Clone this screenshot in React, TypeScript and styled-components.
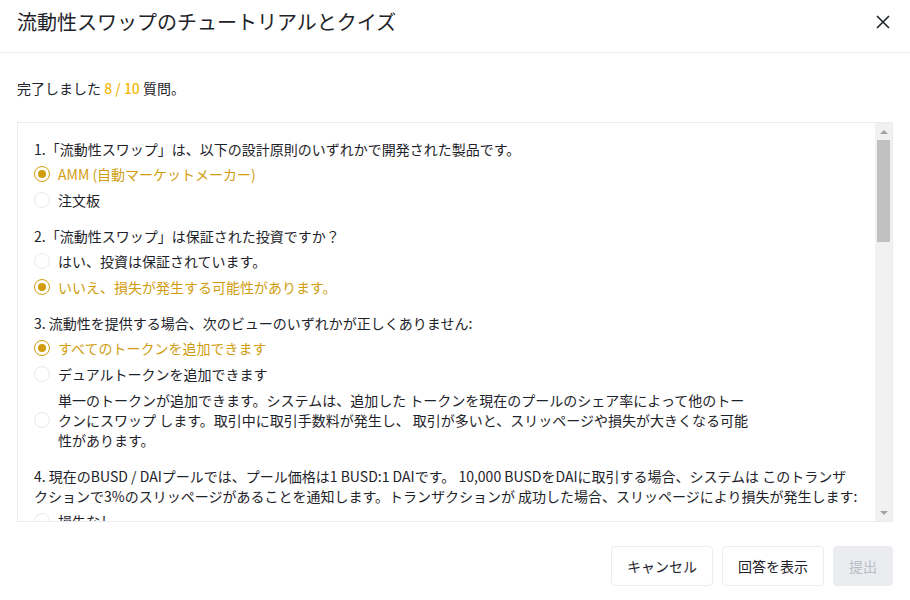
import React from 'react'
import styled, { createGlobalStyle } from 'styled-components'

const GlobalStyle = createGlobalStyle`
  html, body {
    margin: 0;
    padding: 0;
    background: #ffffff;
  }
  body {
    font-family: "Noto Sans CJK JP", "Noto Sans", sans-serif;
    color: #1e2329;
  }
  * {
    box-sizing: border-box;
  }
`

const brand = '#d19d0f'

interface Option {
  label: React.ReactNode
  checked?: boolean
}

interface Question {
  title: React.ReactNode
  options: Option[]
}

const questions: Question[] = [
  {
    title: '1.「流動性スワップ」は、以下の設計原則のいずれかで開発された製品です。',
    options: [{ label: 'AMM (自動マーケットメーカー)', checked: true }, { label: '注文板' }],
  },
  {
    title: '2.「流動性スワップ」は保証された投資ですか？',
    options: [{ label: 'はい、投資は保証されています。' }, { label: 'いいえ、損失が発生する可能性があります。', checked: true }],
  },
  {
    title: '3. 流動性を提供する場合、次のビューのいずれかが正しくありません:',
    options: [
      { label: 'すべてのトークンを追加できます', checked: true },
      { label: 'デュアルトークンを追加できます' },
      {
        label: (
          <>
            単一のトークンが追加できます。システムは、追加した トークンを現在のプールのシェア率によって他のトー
            <br />
            クンにスワップ します。取引中に取引手数料が発生し、 取引が多いと、スリッページや損失が大きくなる可能
            <br />
            性があります。
          </>
        ),
      },
    ],
  },
  {
    title: (
      <>
        4. 現在のBUSD / DAIプールでは、プール価格は1 BUSD:1 DAIです。 10,000 BUSDをDAIに取引する場合、システムは このトランザ
        <br />
        クションで3%のスリッページがあることを通知します。トランザクションが 成功した場合、スリッページにより損失が発生します:
      </>
    ),
    options: [{ label: '損失なし' }],
  },
]

const Dialog = styled.div`
  width: 910px;
  height: 600px;
  display: flex;
  flex-direction: column;
  background: #ffffff;
`

const Header = styled.div`
  height: 53px;
  padding: 8px 20px 0 17px;
  display: flex;
  align-items: flex-start;
  justify-content: space-between;
  border-bottom: 1px solid #eaecef;
`

const Title = styled.h2`
  margin: 0;
  font-size: 20px;
  line-height: 28px;
  font-weight: 400;
  color: #1e2329;
`

const CloseButton = styled.button`
  width: 28px;
  height: 28px;
  margin-right: -7px;
  padding: 0;
  border: none;
  background: transparent;
  display: flex;
  align-items: center;
  justify-content: center;
  color: #1e2329;
  cursor: pointer;
`

const Body = styled.div`
  flex: 1;
  padding: 25px 17px 0;
  display: flex;
  flex-direction: column;
`

const Progress = styled.div`
  font-size: 14px;
  line-height: 20px;
  color: #1e2329;
`

const Count = styled.span`
  color: #f0b90b;
  font-weight: 500;
`

const QuizBox = styled.div`
  margin-top: 24px;
  height: 400px;
  border: 1px solid #eaecef;
  display: flex;
`

const Scroller = styled.div`
  flex: 1;
  min-width: 0;
  padding: 16px 6px 16px 16px;
  overflow-y: auto;
  scrollbar-width: none;
`

const ScrollBar = styled.div`
  flex: none;
  width: 17px;
  display: flex;
  flex-direction: column;
  background: #f1f1f1;
`

const ScrollArrow = styled.div`
  height: 17px;
  display: flex;
  align-items: center;
  justify-content: center;
  color: #a3a3a3;
`

const ScrollTrack = styled.div`
  flex: 1;
  padding: 0 2px;
`

const ScrollThumb = styled.div`
  height: 102px;
  background: #c1c1c1;
`

const QuestionBlock = styled.div`
  & + & {
    margin-top: 13px;
  }
`

const QuestionText = styled.div`
  margin-bottom: 2px;
  font-size: 14px;
  line-height: 20px;
  color: #1e2329;
  white-space: nowrap;
`

const OptionRow = styled.label`
  display: flex;
  align-items: center;
  gap: 8px;
  padding: 3px 0;
  cursor: pointer;
`

const Radio = styled.span<{ $checked?: boolean }>`
  flex: none;
  position: relative;
  width: 16px;
  height: 16px;
  border-radius: 50%;
  border: ${(p) => (p.$checked ? `1.5px solid ${brand}` : '1px solid #e6e8ea')};

  &::after {
    content: '';
    display: ${(p) => (p.$checked ? 'block' : 'none')};
    position: absolute;
    left: 50%;
    top: 50%;
    width: 8px;
    height: 8px;
    margin: -4px 0 0 -4px;
    border-radius: 50%;
    background: ${brand};
  }
`

const OptionText = styled.span<{ $checked?: boolean }>`
  font-size: 14px;
  line-height: 20px;
  color: ${(p) => (p.$checked ? brand : '#1e2329')};
`

const Footer = styled.div`
  margin-top: 24px;
  display: flex;
  justify-content: flex-end;
  gap: 9px;
`

const Button = styled.button<{ $disabled?: boolean }>`
  height: 40px;
  padding: 0 15px;
  font-family: inherit;
  font-size: 14px;
  border-radius: 4px;
  border: 1px solid #eaecef;
  background: ${(p) => (p.$disabled ? '#eaecef' : '#ffffff')};
  color: ${(p) => (p.$disabled ? '#b7bdc6' : '#1e2329')};
  cursor: ${(p) => (p.$disabled ? 'not-allowed' : 'pointer')};
`

const CloseIcon = () => (
  <svg width="14" height="14" viewBox="0 0 14 14" fill="none">
    <path d="M1 1L13 13M13 1L1 13" stroke="currentColor" strokeWidth="1.6" />
  </svg>
)

const Arrow = ({ down }: { down?: boolean }) => (
  <svg width="8" height="4" viewBox="0 0 8 4">
    <path d={down ? 'M0 0H8L4 4Z' : 'M0 4H8L4 0Z'} fill="currentColor" />
  </svg>
)

const App = () => {
  return (
    <>
      <GlobalStyle />
      <Dialog>
        <Header>
          <Title>流動性スワップのチュートリアルとクイズ</Title>
          <CloseButton aria-label="close">
            <CloseIcon />
          </CloseButton>
        </Header>
        <Body>
          <Progress>
            完了しました <Count>8 / 10</Count> 質問。
          </Progress>
          <QuizBox>
            <Scroller>
              {questions.map((q, qi) => (
                <QuestionBlock key={qi}>
                  <QuestionText>{q.title}</QuestionText>
                  {q.options.map((o, oi) => (
                    <OptionRow key={oi}>
                      <Radio $checked={o.checked} />
                      <OptionText $checked={o.checked}>{o.label}</OptionText>
                    </OptionRow>
                  ))}
                </QuestionBlock>
              ))}
            </Scroller>
            <ScrollBar>
              <ScrollArrow>
                <Arrow />
              </ScrollArrow>
              <ScrollTrack>
                <ScrollThumb />
              </ScrollTrack>
              <ScrollArrow>
                <Arrow down />
              </ScrollArrow>
            </ScrollBar>
          </QuizBox>
          <Footer>
            <Button>キャンセル</Button>
            <Button>回答を表示</Button>
            <Button $disabled>提出</Button>
          </Footer>
        </Body>
      </Dialog>
    </>
  )
}

export default App
